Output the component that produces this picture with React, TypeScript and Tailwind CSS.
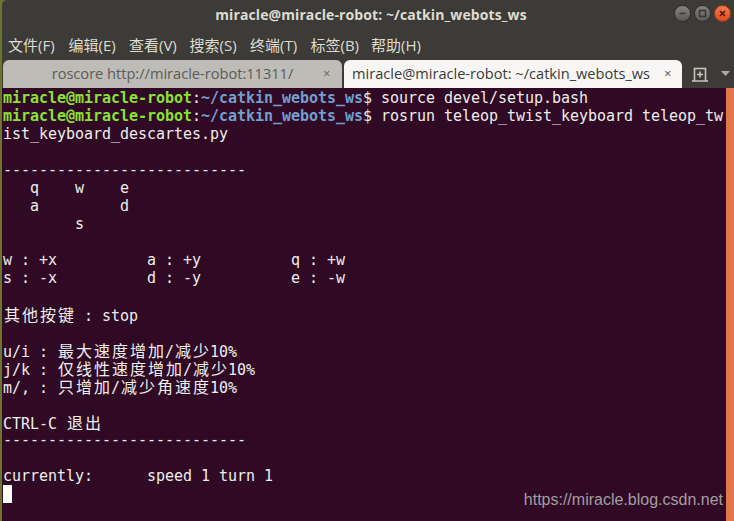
import React from "react";

type Seg = { t: string; c?: string };

const G = "text-[#8ae234] font-bold";
const B = "text-[#729fcf] font-bold";

const lines: Seg[][] = [
  [{ t: "miracle@miracle-robot", c: G }, { t: ":" }, { t: "~/catkin_webots_ws", c: B }, { t: "$ source devel/setup.bash" }],
  [{ t: "miracle@miracle-robot", c: G }, { t: ":" }, { t: "~/catkin_webots_ws", c: B }, { t: "$ rosrun teleop_twist_keyboard teleop_tw" }],
  [{ t: "ist_keyboard_descartes.py" }],
  [],
  [{ t: "---------------------------" }],
  [{ t: "   q    w    e" }],
  [{ t: "   a         d" }],
  [{ t: "        s" }],
  [],
  [{ t: "w : +x          a : +y          q : +w" }],
  [{ t: "s : -x          d : -y          e : -w" }],
  [],
  [{ t: "其他按键 : stop" }],
  [],
  [{ t: "u/i : 最大速度增加/减少10%" }],
  [{ t: "j/k : 仅线性速度增加/减少10%" }],
  [{ t: "m/, : 只增加/减少角速度10%" }],
  [],
  [{ t: "CTRL-C 退出" }],
  [{ t: "---------------------------" }],
  [],
  [{ t: "currently:      speed 1 turn 1" }],
];

const cjk = /[\u3400-\u9fff]/;

// CJK glyphs take two terminal cells (18px)
function renderText(text: string) {
  const out: React.ReactNode[] = [];
  let buf = "";
  [...text].forEach((ch, i) => {
    if (cjk.test(ch)) {
      if (buf) out.push(<span key={"b" + i}>{buf}</span>);
      buf = "";
      out.push(
        <span
          key={"c" + i}
          className="inline-block w-[18px] text-center text-[16px] leading-[18px] font-['Noto_Sans_CJK_SC',sans-serif]"
        >
          {ch}
        </span>
      );
    } else {
      buf += ch;
    }
  });
  if (buf) out.push(<span key="end">{buf}</span>);
  return out;
}

const menus = ["文件(F)", "编辑(E)", "查看(V)", "搜索(S)", "终端(T)", "标签(B)", "帮助(H)"];

const WinButton = ({ kind }: { kind: "min" | "max" | "close" }) => {
  const close = kind === "close";
  return (
    <div
      className={
        "w-[17px] h-[17px] rounded-full flex items-center justify-center border " +
        (close
          ? "bg-gradient-to-b from-[#f37a4e] to-[#e0481c] border-[#a8391a]"
          : "bg-gradient-to-b from-[#84837e] to-[#5b5a56] border-[#2f2e2b]")
      }
    >
      <svg width="9" height="9" viewBox="0 0 9 9" fill="none" stroke={close ? "#4a1a0a" : "#3a3935"} strokeWidth="1.6">
        {kind === "min" && <path d="M1.5 4.5h6" />}
        {kind === "max" && <rect x="1.5" y="1.5" width="6" height="6" />}
        {kind === "close" && <path d="M2 2l5 5M7 2l-5 5" />}
      </svg>
    </div>
  );
};

export default function App() {
  return (
    <div className="w-[734px] h-[521px] flex bg-[#6b7530] overflow-hidden font-['Open_Sans','Noto_Sans_CJK_SC',sans-serif]">
      <div className="w-[2px] shrink-0" />
      <div className="flex-1 flex flex-col bg-[#3c3b37] rounded-tl-[5px]">
        {/* title bar */}
        <div className="h-[29px] flex items-center relative">
          <div className="flex-1 text-center text-[14px] font-bold text-[#dfdbd2] pl-[6px] tracking-[0.1px]">
            miracle@miracle-robot: ~/catkin_webots_ws
          </div>
          <div className="absolute right-[3px] top-[5px] flex gap-[3px]">
            <WinButton kind="min" />
            <WinButton kind="max" />
            <WinButton kind="close" />
          </div>
        </div>

        {/* menu bar */}
        <div className="h-[31px] flex items-center pl-[6px] pt-[2px] text-[15px] text-[#dfdbd2]">
          {menus.map((m) => (
            <span key={m} className="w-[60.5px] whitespace-nowrap">
              {m}
            </span>
          ))}
        </div>

        {/* tabs */}
        <div className="h-[28px] flex items-end gap-[2px] pl-[1px]">
          <div className="w-[339px] h-[28px] bg-[#bebcb7] rounded-t-[6px] flex items-center text-[14.6px] text-[#5c5b57]">
            <span className="flex-1 text-center pl-[19px] whitespace-nowrap">roscore http://miracle-robot:11311/</span>
            <span className="w-[19px] text-[13px] text-[#6b6a66]">×</span>
          </div>
          <div className="w-[338px] h-[28px] bg-[#f7f6f5] rounded-t-[6px] flex items-center text-[14.6px] text-[#3c3b37]">
            <span className="flex-1 pl-[8px] whitespace-nowrap">miracle@miracle-robot: ~/catkin_webots_ws</span>
            <span className="w-[18px] text-[13px] text-[#55544f]">×</span>
          </div>
          <div className="flex-1 h-[28px] flex items-center justify-between pl-[7px] pr-[4px]">
            <svg width="18" height="15" viewBox="0 0 18 15" fill="none" stroke="#c8c5bd" strokeWidth="1.6">
              <path d="M1 14h16M3.5 14V1.5h11V14" />
              <path d="M9 4.5v6M6 7.5h6" />
            </svg>
            <svg width="9" height="6" viewBox="0 0 9 6">
              <path d="M0 0h9L4.5 5z" fill="#aeaba4" />
            </svg>
          </div>
        </div>

        {/* terminal */}
        <div className="flex-1 flex">
          <div className="flex-1 relative bg-[#300a24] pl-[1px] pt-[1px] text-[#eeeeec] text-[15px] leading-[18px] font-['DejaVu_Sans_Mono',monospace] tracking-[-0.03px]">
            {lines.map((segs, i) => (
              <div key={i} className="h-[18px] whitespace-pre">
                {segs.map((s, j) => (
                  <span key={j} className={s.c}>
                    {renderText(s.t)}
                  </span>
                ))}
              </div>
            ))}
            <div className="h-[18px] flex items-center">
              <div className="w-[9px] h-[18px] bg-white" />
            </div>
            <div className="absolute right-[3px] bottom-[12px] text-[16px] text-[#a39da1] font-['Liberation_Sans',sans-serif] tracking-normal">
              https://miracle.blog.csdn.net
            </div>
          </div>
          <div className="w-[8px] bg-[#e0784c]" />
        </div>
      </div>
    </div>
  );
}
